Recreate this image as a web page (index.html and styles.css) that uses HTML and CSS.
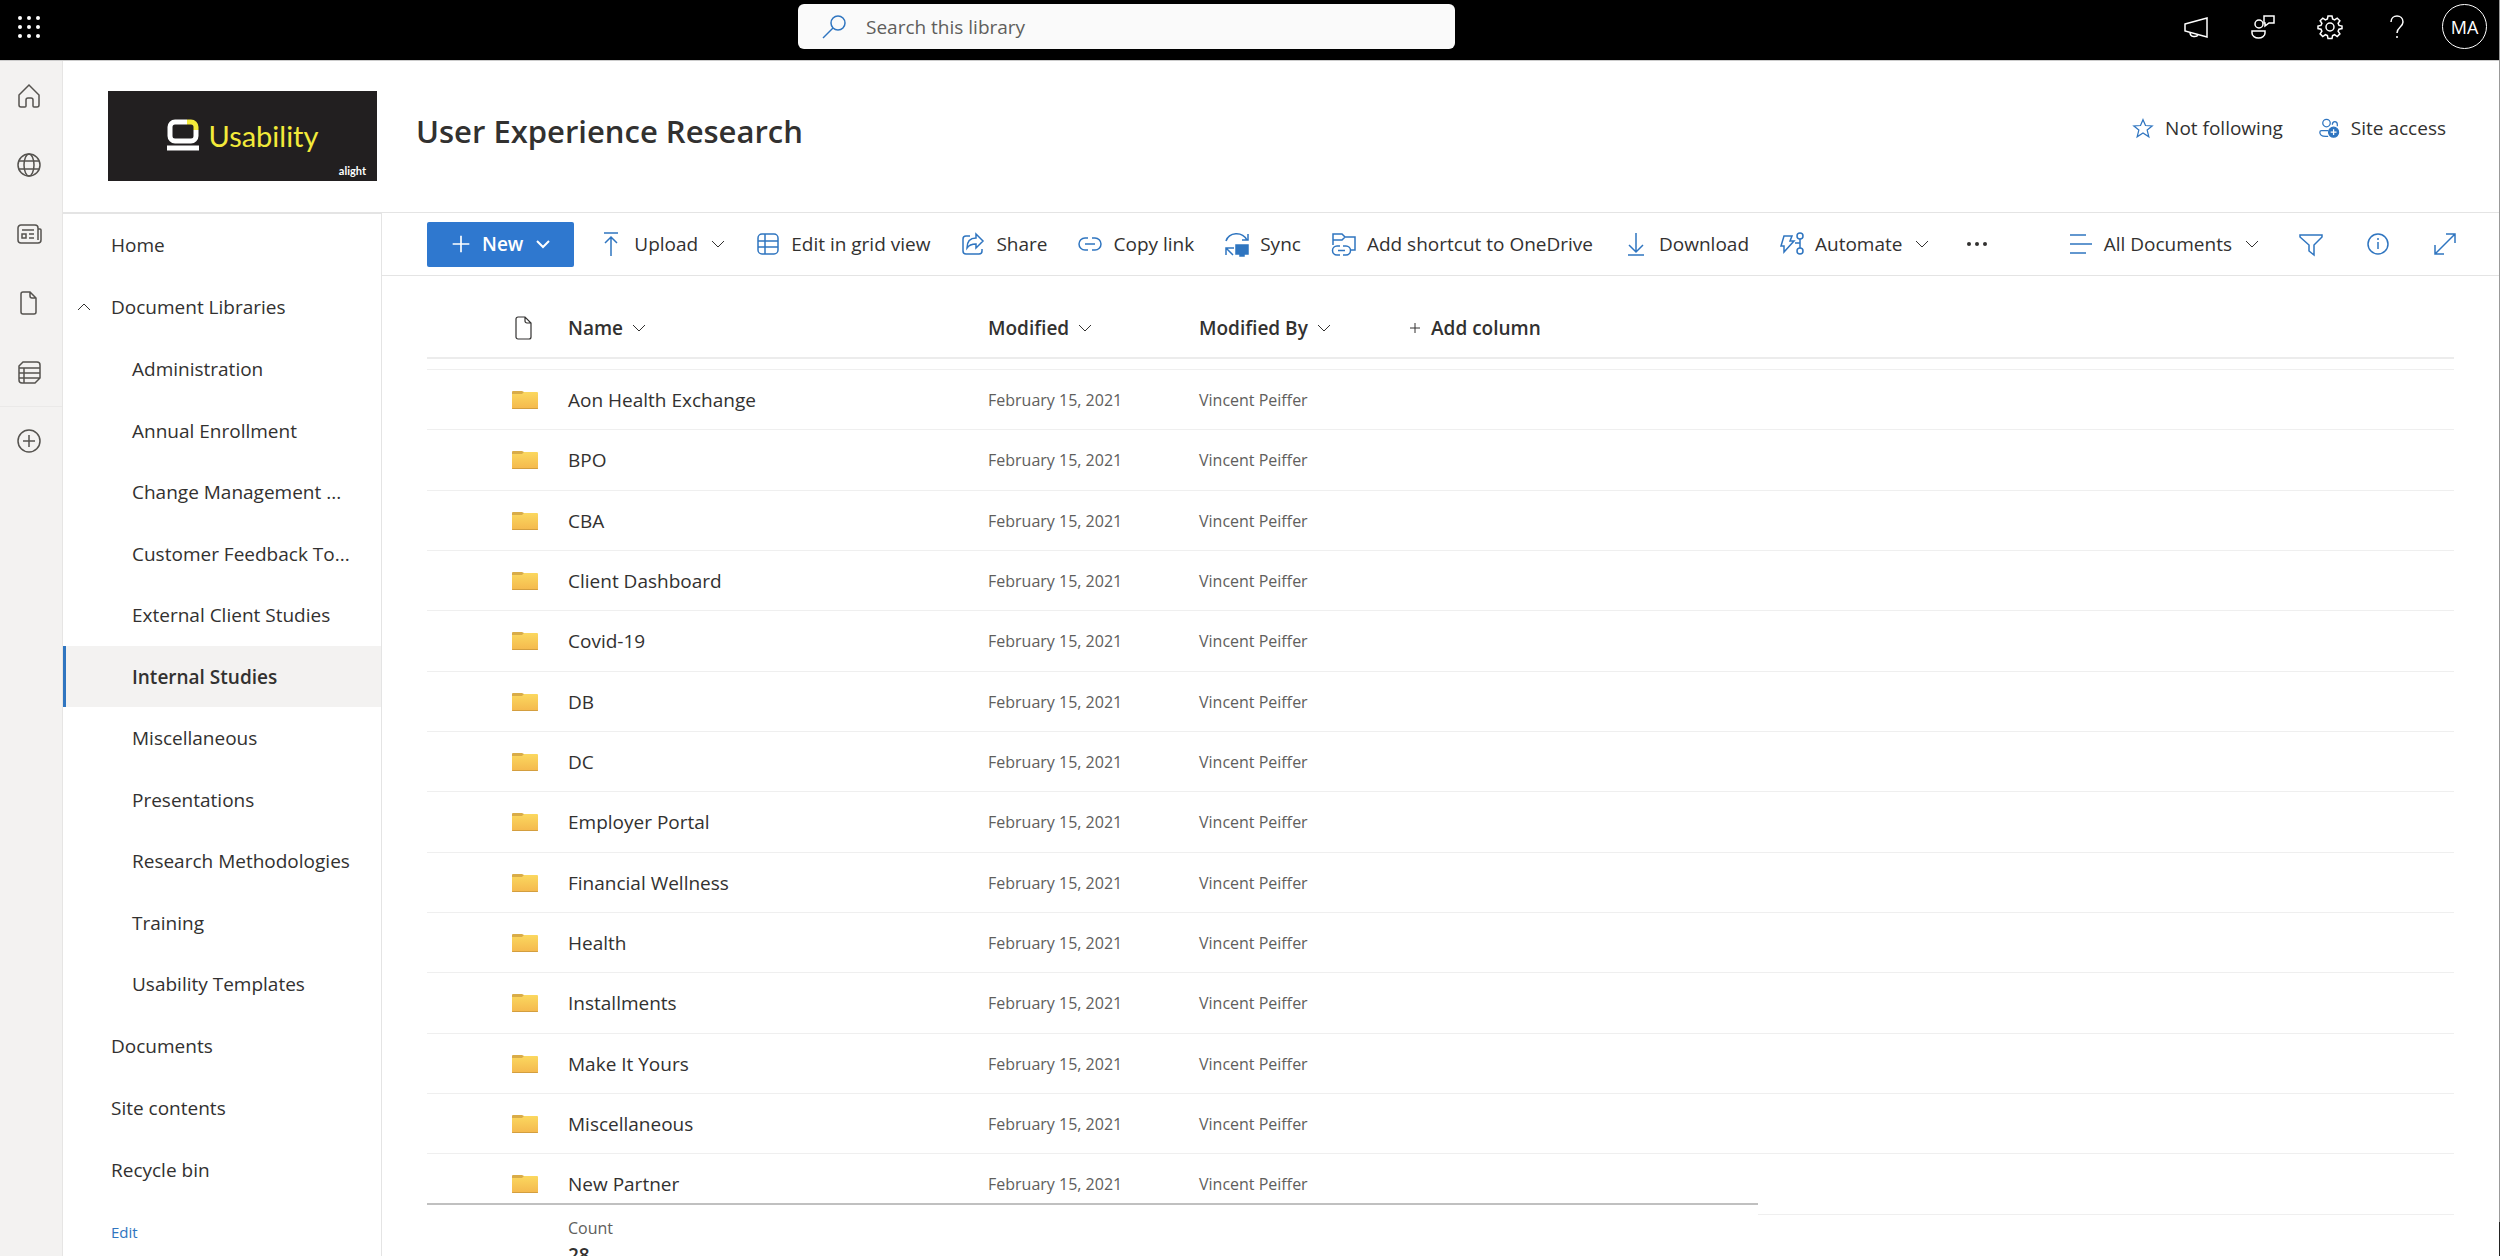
FILE: index.html
```html
<!DOCTYPE html>
<html lang="en">
<head>
    <meta charset="UTF-8">
    <meta name="viewport" content="width=device-width, initial-scale=1.0">
    <title>User Experience Research - Internal Studies</title>
    <link rel="stylesheet" href="styles.css">
</head>
<body>

    <!-- shared icons -->
    <svg class="sprite" aria-hidden="true">
        <defs>
            <linearGradient id="folderFill" x1="0" y1="0" x2="0" y2="1">
                <stop offset="0" stop-color="#fbd85f"/>
                <stop offset="1" stop-color="#f4b84d"/>
            </linearGradient>
        </defs>
        <symbol id="folder" viewBox="0 0 26 20">
            <path d="M0 2a1 1 0 0 1 1-1h9l2 1v3H0z" fill="#d9ac48"/>
            <path d="M0 4h10l2-2h13a1 1 0 0 1 1 1v16H0z" fill="url(#folderFill)"/>
            <path d="M0 18h26a1 1 0 0 1-1 1H1a1 1 0 0 1-1-1z" fill="#d39e3f"/>
        </symbol>
        <symbol id="chevron" viewBox="0 0 14 14">
            <path d="M1 4l6 6 6-6"/>
        </symbol>
        <symbol id="file" viewBox="0 0 24 24">
            <path d="M6 1h7l6 6v14a2 2 0 0 1-2 2H6a2 2 0 0 1-2-2V3a2 2 0 0 1 2-2zM13 1v4a2 2 0 0 0 2 2h4"/>
        </symbol>
    </svg>

    <div class="page">

    <header class="topbar">
        <button class="waffle" aria-label="App launcher">
            <svg class="icon solid" viewBox="0 0 24 24">
                <circle cx="3" cy="3" r="2"/><circle cx="12" cy="3" r="2"/><circle cx="21" cy="3" r="2"/>
                <circle cx="3" cy="12" r="2"/><circle cx="12" cy="12" r="2"/><circle cx="21" cy="12" r="2"/>
                <circle cx="3" cy="21" r="2"/><circle cx="12" cy="21" r="2"/><circle cx="21" cy="21" r="2"/>
            </svg>
        </button>

        <label class="search">
            <svg class="icon blue" viewBox="0 0 24 24"><circle cx="16" cy="8" r="7"/><path d="M11 13L1 23"/></svg>
            <input type="search" placeholder="Search this library" aria-label="Search this library">
        </label>

        <div class="topActions">
            <button aria-label="Announcements">
                <svg class="icon" viewBox="0 0 24 24"><path d="M1 9l22-6v19L1 16zM6 17.5c0 5 7 5 8 2"/></svg>
            </button>
            <button aria-label="Feedback">
                <svg class="icon" viewBox="0 0 24 24"><circle cx="8" cy="9" r="4"/><path d="M1 16h13v2c0 3-3 5-6.500 5S1 21 1 18zM13 1h10v7h-5l-4 3V8h-1z"/></svg>
            </button>
            <button aria-label="Settings">
                <svg class="icon" viewBox="0 0 24 24"><circle cx="12" cy="12" r="4"/><path d="M10 1h4l.6 3 2 .9 2.6-1.8 2.700 2.700-1.800 2.600.9 2 3 .6v2.600l-3 .6-.9 2 1.800 2.600-2.700 2.700-2.600-1.800-2 .9-.6 3h-4l-.6-3-2-.9-2.600 1.800-2.700-2.700 1.800-2.600-.9-2-3-.6V11l3-.6.9-2L2.100 5.800l2.700-2.700 2.600 1.800 2-.9z"/></svg>
            </button>
            <button aria-label="Help">
                <svg class="icon" viewBox="0 0 24 24"><path d="M6 7c0-8 12-8 12 0 0 5-6 5-6 11M12 21v2"/></svg>
            </button>
            <button class="avatar">MA</button>
        </div>
    </header>

    <div class="body">

        <nav class="rail" aria-label="SharePoint">
            <a href="#" aria-label="Home">
                <svg class="icon" viewBox="0 0 24 24"><path d="M2 11L12 1l10 10v10a2 2 0 0 1-2 2h-3a1 1 0 0 1-1-1v-6a2 2 0 0 0-2-2h-3a2 2 0 0 0-2 2v6a1 1 0 0 1-1 1H4a2 2 0 0 1-2-2z"/></svg>
            </a>
            <a href="#" aria-label="My sites">
                <svg class="icon" viewBox="0 0 24 24"><circle cx="12" cy="12" r="11"/><ellipse cx="12" cy="12" rx="5" ry="11"/><path d="M2 8h20M2 16h20"/></svg>
            </a>
            <a href="#" aria-label="News">
                <svg class="icon" viewBox="0 0 24 24"><path d="M4 3h14a3 3 0 0 1 3 3v12M4 3a3 3 0 0 0-3 3v12a3 3 0 0 0 3 3h17a3 3 0 0 0 3-3V8a1 1 0 0 0-1-1h-2M5 8h12M12 12h5M12 16h5M5 12h4v4H5z"/></svg>
            </a>
            <a href="#" aria-label="Files">
                <svg class="icon"><use href="#file"/></svg>
            </a>
            <a href="#" aria-label="Lists">
                <svg class="icon" viewBox="0 0 24 24"><path d="M2 6l4-4h14a3 3 0 0 1 3 3v13l-5 5H5a3 3 0 0 1-3-3zM2 8h21M2 13h21M2 18h21M7 8v15"/></svg>
            </a>
            <a href="#" class="create" aria-label="Create">
                <svg class="icon" viewBox="0 0 24 24"><circle cx="12" cy="12" r="11"/><path d="M12 6v12M6 12h12"/></svg>
            </a>
        </nav>

        <div class="site">

            <div class="siteHeader">
                <a href="#" class="logo">
                    <svg class="logoMark" viewBox="0 0 32 32">
                        <path d="M20 3H8a5 5 0 0 0-5 5v9a5 5 0 0 0 5 5h16a5 5 0 0 0 5-5v-6" stroke="#fff"/>
                        <path d="M20 3h4a5 5 0 0 1 5 5v3" stroke="#f3ea3a"/>
                        <path d="M0 29h32" stroke="#fff"/>
                    </svg>
                    <span class="logoText">Usability</span>
                    <span class="logoBrand">alight</span>
                </a>
                <h1>User Experience Research</h1>
                <div class="siteActions">
                    <button>
                        <svg class="icon small blue" viewBox="0 0 24 24"><path d="M12 2l3 7 8 .5-6 5 2 8-7-4.500-7 4.500 2-8-6-5L9 9z"/></svg>
                        Not following
                    </button>
                    <button>
                        <svg class="icon small blue" viewBox="0 0 24 24"><circle cx="9" cy="6" r="4.500"/><path d="M11 22H8c-4 0-7-2-7-5 0-1 1-2 2-2h8M16 8c0-5 6-5 6 0v2"/><circle class="fill" cx="17.500" cy="17" r="6"/><path class="white" d="M17.500 13.500v7M14 17h7"/></svg>
                        Site access
                    </button>
                </div>
            </div>

            <div class="columns">

                <nav class="sideNav" aria-label="Site">
                    <ul>
                        <li><a href="#">Home</a></li>
                        <li>
                            <a href="#" class="group"><svg class="chevron up"><use href="#chevron"/></svg>Document Libraries</a>
                            <ul class="subNav">
                                <li><a href="#">Administration</a></li>
                                <li><a href="#">Annual Enrollment</a></li>
                                <li><a href="#">Change Management ...</a></li>
                                <li><a href="#">Customer Feedback To...</a></li>
                                <li><a href="#">External Client Studies</a></li>
                                <li><a href="#" class="selected">Internal Studies</a></li>
                                <li><a href="#">Miscellaneous</a></li>
                                <li><a href="#">Presentations</a></li>
                                <li><a href="#">Research Methodologies</a></li>
                                <li><a href="#">Training</a></li>
                                <li><a href="#">Usability Templates</a></li>
                            </ul>
                        </li>
                        <li><a href="#">Documents</a></li>
                        <li><a href="#">Site contents</a></li>
                        <li><a href="#">Recycle bin</a></li>
                        <li><a href="#" class="edit">Edit</a></li>
                    </ul>
                </nav>

                <main>
                    <div class="commandBar">
                        <button class="newButton">
                            <svg class="icon small" viewBox="0 0 24 24"><path d="M12 2v20M2 12h20"/></svg>
                            New
                            <svg class="chevron"><use href="#chevron"/></svg>
                        </button>
                        <button>
                            <svg class="icon blue" viewBox="0 0 24 24"><path d="M5 1h14M12 5v19M6 11l6-6 6 6"/></svg>
                            Upload
                            <svg class="chevron"><use href="#chevron"/></svg>
                        </button>
                        <button>
                            <svg class="icon blue" viewBox="0 0 24 24"><rect x="2" y="2" width="20" height="20" rx="4"/><path d="M2 9h20M2 15h20M9 2v20"/></svg>
                            Edit in grid view
                        </button>
                        <button>
                            <svg class="icon blue" viewBox="0 0 24 24"><path d="M9 4H5a3 3 0 0 0-3 3v12a3 3 0 0 0 3 3h13a3 3 0 0 0 3-3v-2M15 2l7 7-7 7v-4c-4 0-7 1-9 4 0-6 3-10 9-10z"/></svg>
                            Share
                        </button>
                        <button>
                            <svg class="icon blue" viewBox="0 0 24 24"><path d="M10 6H7a6 6 0 0 0 0 12h3M14 6h3a6 6 0 0 1 0 12h-3M7 12h10"/></svg>
                            Copy link
                        </button>
                        <button>
                            <svg class="icon blue" viewBox="0 0 24 24"><path d="M1 9C4 0 17-1 22 8M23 2v6h-6M9 16H1v7M1 16l7 7"/><path class="fill" d="M11 13h12v9h-4v2h-4v-2h-4z"/></svg>
                            Sync
                        </button>
                        <button>
                            <svg class="icon blue" viewBox="0 0 24 24"><path d="M1 13V2h9l3 3h10v13h-4M1 8h9l3-3M8 14H5a4 4 0 0 0 0 9h3M11 14h3a4 4 0 0 1 0 9h-3M6 18.500h7"/></svg>
                            Add shortcut to OneDrive
                        </button>
                        <button>
                            <svg class="icon blue" viewBox="0 0 24 24"><path d="M12 1v18M5 13l7 7 7-7M4 23h16"/></svg>
                            Download
                        </button>
                        <button>
                            <svg class="icon blue" viewBox="0 0 24 24"><path d="M4 4h8l-2 5h4L4 20v-6H1z"/><circle cx="20" cy="4" r="3"/><circle cx="20" cy="19" r="3"/><path d="M20 7v9M15 11h5"/></svg>
                            Automate
                            <svg class="chevron"><use href="#chevron"/></svg>
                        </button>
                        <button class="more" aria-label="More">
                            <svg class="icon solid" viewBox="0 0 24 24"><circle cx="4" cy="12" r="2"/><circle cx="12" cy="12" r="2"/><circle cx="20" cy="12" r="2"/></svg>
                        </button>

                        <button class="viewMenu">
                            <svg class="icon blue" viewBox="0 0 24 24"><path d="M1 3h16M1 12h22M1 21h16"/></svg>
                            All Documents
                            <svg class="chevron"><use href="#chevron"/></svg>
                        </button>
                        <div class="viewTools">
                            <button aria-label="Filters">
                                <svg class="icon blue" viewBox="0 0 24 24"><path d="M1 3h22v2l-8 8v10l-5-4v-6L1 5z"/></svg>
                            </button>
                            <button aria-label="Details">
                                <svg class="icon blue" viewBox="0 0 24 24"><circle cx="12" cy="12" r="10"/><path d="M12 10v7M12 6v2"/></svg>
                            </button>
                            <button aria-label="Expand">
                                <svg class="icon blue" viewBox="0 0 24 24"><path d="M2 22L22 2M13 2h9v9M2 13v9h9"/></svg>
                            </button>
                        </div>
                    </div>

                    <div class="list">
                        <table>
                            <thead>
                                <tr>
                                    <th class="colType"><svg class="icon thin" aria-label="File type"><use href="#file"/></svg></th>
                                    <th class="colName"><button>Name <svg class="chevron"><use href="#chevron"/></svg></button></th>
                                    <th class="colDate"><button>Modified <svg class="chevron"><use href="#chevron"/></svg></button></th>
                                    <th class="colBy"><button>Modified By <svg class="chevron"><use href="#chevron"/></svg></button></th>
                                    <th><button><svg class="chevron" viewBox="0 0 14 14"><path d="M7 2v10M2 7h10"/></svg> Add column</button></th>
                                </tr>
                            </thead>
                            <tbody>
                                <tr class="clipped"><td colspan="5"></td></tr>
                                <tr><td><svg class="folder"><use href="#folder"/></svg></td><td><a href="#">Aon Health Exchange</a></td><td>February 15, 2021</td><td>Vincent Peiffer</td><td></td></tr>
                                <tr><td><svg class="folder"><use href="#folder"/></svg></td><td><a href="#">BPO</a></td><td>February 15, 2021</td><td>Vincent Peiffer</td><td></td></tr>
                                <tr><td><svg class="folder"><use href="#folder"/></svg></td><td><a href="#">CBA</a></td><td>February 15, 2021</td><td>Vincent Peiffer</td><td></td></tr>
                                <tr><td><svg class="folder"><use href="#folder"/></svg></td><td><a href="#">Client Dashboard</a></td><td>February 15, 2021</td><td>Vincent Peiffer</td><td></td></tr>
                                <tr><td><svg class="folder"><use href="#folder"/></svg></td><td><a href="#">Covid-19</a></td><td>February 15, 2021</td><td>Vincent Peiffer</td><td></td></tr>
                                <tr><td><svg class="folder"><use href="#folder"/></svg></td><td><a href="#">DB</a></td><td>February 15, 2021</td><td>Vincent Peiffer</td><td></td></tr>
                                <tr><td><svg class="folder"><use href="#folder"/></svg></td><td><a href="#">DC</a></td><td>February 15, 2021</td><td>Vincent Peiffer</td><td></td></tr>
                                <tr><td><svg class="folder"><use href="#folder"/></svg></td><td><a href="#">Employer Portal</a></td><td>February 15, 2021</td><td>Vincent Peiffer</td><td></td></tr>
                                <tr><td><svg class="folder"><use href="#folder"/></svg></td><td><a href="#">Financial Wellness</a></td><td>February 15, 2021</td><td>Vincent Peiffer</td><td></td></tr>
                                <tr><td><svg class="folder"><use href="#folder"/></svg></td><td><a href="#">Health</a></td><td>February 15, 2021</td><td>Vincent Peiffer</td><td></td></tr>
                                <tr><td><svg class="folder"><use href="#folder"/></svg></td><td><a href="#">Installments</a></td><td>February 15, 2021</td><td>Vincent Peiffer</td><td></td></tr>
                                <tr><td><svg class="folder"><use href="#folder"/></svg></td><td><a href="#">Make It Yours</a></td><td>February 15, 2021</td><td>Vincent Peiffer</td><td></td></tr>
                                <tr><td><svg class="folder"><use href="#folder"/></svg></td><td><a href="#">Miscellaneous</a></td><td>February 15, 2021</td><td>Vincent Peiffer</td><td></td></tr>
                                <tr><td><svg class="folder"><use href="#folder"/></svg></td><td><a href="#">New Partner</a></td><td>February 15, 2021</td><td>Vincent Peiffer</td><td></td></tr>
                            </tbody>
                        </table>
                        <!-- totals stay over the bottom of the list -->
                        <div class="totals">
                            <span>Count</span>
                            <strong>28</strong>
                        </div>
                    </div>
                </main>

            </div>
        </div>
    </div>
    </div>

</body>
</html>
```
FILE: styles.css
```css
*{
    box-sizing: border-box;
}

body{
    margin: 0;
    font-family: "Open Sans", "Noto Sans", sans-serif;
    font-size: 19px;
    color: #323130;
    background-color: #fff;
}

a{
    color: inherit;
    text-decoration: none;
}

ul{
    margin: 0;
    padding: 0;
    list-style: none;
}

button{
    display: flex;
    align-items: center;
    padding: 0;
    border: 0;
    background: none;
    font: inherit;
    color: inherit;
    white-space: nowrap;
    cursor: pointer;
}

.sprite{
    position: absolute;
    width: 0;
    height: 0;
}

/* thin window edge on the right */
.page{
    display: flex;
    flex-direction: column;
    height: 100vh;
    overflow: hidden;
    padding-right: 1px;
    background: linear-gradient(#999 calc(100% - 34px), #222 0);
}

/* icons */
.icon{
    flex: none;
    display: block;
    width: 24px;
    height: 24px;
    overflow: visible;
    fill: none;
    stroke: currentColor;
    stroke-width: 1.5;
}

.icon.small{
    width: 20px;
    height: 20px;
}

.icon.thin{
    stroke-width: 1.2;
}

.icon.solid{
    fill: currentColor;
    stroke: none;
}

.blue{
    color: #2f75c0;
}

.icon .fill{
    fill: currentColor;
}

.icon .white{
    stroke: #fff;
}

.chevron{
    flex: none;
    width: 14px;
    height: 14px;
    fill: none;
    stroke: currentColor;
    stroke-width: 1;
}

.chevron.up{
    transform: rotate(180deg);
}

.folder{
    display: block;
    width: 26px;
    height: 20px;
}

/* top bar */
.topbar{
    flex: none;
    display: grid;
    grid-template-columns: 798fr 657fr 1044fr;
    height: 61px;
    padding-bottom: 7px;
    align-items: center;
    background-color: #000;
    border-bottom: 1px solid #ccc;
    color: #fff;
}

.waffle{
    width: 58px;
    height: 52px;
    justify-content: center;
}

.search{
    display: flex;
    align-items: center;
    gap: 20px;
    height: 45px;
    padding: 0 24px;
    border-radius: 6px;
    background-color: #fafafa;
}

.search input{
    flex: 1;
    padding: 0;
    border: 0;
    outline: 0;
    background: none;
    font: inherit;
    color: #605e5c;
}

.search input::placeholder{
    color: #605e5c;
    opacity: 1;
}

.topActions{
    display: flex;
    justify-content: flex-end;
    align-items: center;
    padding-right: 12px;
}

.topActions button{
    width: 67px;
    justify-content: center;
}

.topActions .avatar{
    width: 45px;
    height: 45px;
    margin-left: 12px;
    border: 1px solid #fff;
    border-radius: 50%;
    font-size: 18px;
}

/* left rail */
.body{
    flex: 1;
    min-height: 0;
    display: flex;
}

.rail{
    flex: none;
    width: 63px;
    background-color: #f3f2f1;
    border-right: 1px solid #e6e5e4;
    color: #55534f;
}

.rail a{
    display: flex;
    align-items: center;
    height: 69px;
    padding-left: 17px;
}

.rail .create{
    border-top: 1px solid #eae9e8;
}

.site{
    flex: 1;
    min-width: 0;
    display: flex;
    flex-direction: column;
    background-color: #fff;
}

/* site header */
.siteHeader{
    flex: none;
    display: flex;
    align-items: flex-start;
    height: 152px;
    padding: 30px 53px 0 45px;
    border-bottom: 1px solid #e4e4e4;
}

.logo{
    position: relative;
    display: flex;
    align-items: center;
    justify-content: center;
    gap: 10px;
    width: 269px;
    height: 90px;
    padding-bottom: 2px;
    background-color: #221f20;
}

.logoMark{
    width: 32px;
    height: 32px;
    fill: none;
    stroke-width: 5;
}

.logoText{
    font-family: Lato, sans-serif;
    font-size: 29px;
    color: #f3ea3a;
}

.logoBrand{
    position: absolute;
    right: 11px;
    bottom: 4px;
    font-family: Lato, sans-serif;
    font-size: 11px;
    font-weight: bold;
    color: #fff;
}

h1{
    margin: 0 0 0 39px;
    font-size: 31px;
    font-weight: 600;
    line-height: 80px;
}

.siteActions{
    display: flex;
    gap: 36px;
    margin-left: auto;
}

.siteActions button{
    gap: 12px;
    line-height: 74px;
}

/* site navigation */
.columns{
    flex: 1;
    min-height: 0;
    display: flex;
}

.sideNav{
    flex: none;
    width: 319px;
    overflow: hidden;
    border-top: 1px solid #e4e4e4;
    border-right: 1px solid #e4e4e4;
}

.sideNav a{
    display: flex;
    align-items: center;
    height: 62px;
    padding-left: 48px;
    white-space: nowrap;
}

.sideNav .group{
    padding-left: 14px;
    gap: 20px;
}

.subNav a{
    padding-left: 69px;
}

.subNav li:nth-child(2n) a{
    height: 61px;
}

.subNav .selected{
    padding-left: 66px;
    border-left: 3px solid #2f75c0;
    background-color: #f3f2f1;
    font-weight: 600;
}

.sideNav .edit{
    font-size: 15px;
    color: #2f75c0;
}

/* command bar */
main{
    flex: 1;
    min-width: 0;
    display: flex;
    flex-direction: column;
}

.commandBar{
    flex: none;
    display: flex;
    align-items: center;
    gap: 31px;
    height: 63px;
    padding: 0 21px 0 45px;
    border-bottom: 1px solid #e4e4e4;
}

.commandBar button{
    gap: 11px;
}

.commandBar .chevron{
    margin-left: 2px;
}

.commandBar .newButton{
    height: 45px;
    padding: 0 24px;
    margin-right: -6px;
    border-radius: 2px;
    background-color: #2f78cf;
    color: #fff;
    font-weight: 600;
}

.commandBar .more{
    margin-left: 5px;
}

.commandBar .viewMenu{
    margin-left: auto;
    margin-right: -13px;
}

.newButton .icon,
.newButton .chevron{
    stroke-width: 2;
}

.viewTools{
    display: flex;
}

.viewTools button{
    width: 67px;
    justify-content: center;
}

/* document list */
.list{
    position: relative;
    flex: 1;
    min-height: 0;
    overflow: hidden;
    padding: 0 45px;
}

table{
    width: 100%;
    table-layout: fixed;
    border-collapse: separate;
    border-spacing: 0;
}

th{
    height: 83px;
    padding: 22px 0 0;
    border-bottom: 2px solid #ececec;
    text-align: left;
    font-weight: 600;
}

th button{
    gap: 9px;
}

.colType{
    width: 141px;
}

.colName{
    width: 420px;
}

.colDate{
    width: 211px;
}

.colBy{
    width: 209px;
}

td{
    height: 60px;
    padding: 0;
    border-bottom: 1px solid #efefef;
    font-size: 16px;
    color: #605e5c;
}

td:first-child,
.colType{
    padding-left: 85px;
}

td a{
    font-size: 19px;
    color: #323130;
}

tr:nth-child(3n) td{
    height: 61px;
}

.clipped td{
    height: 11px;
}

.totals{
    position: absolute;
    left: 45px;
    bottom: 0;
    display: flex;
    flex-direction: column;
    width: 1331px;
    height: 53px;
    padding: 10px 0 0 141px;
    overflow: hidden;
    border-top: 2px solid #c0c0c0;
    background-color: #fff;
    font-size: 16px;
    line-height: 26px;
    color: #605e5c;
}

.totals strong{
    font-size: 19px;
    font-weight: 600;
    line-height: 28px;
    color: #323130;
}
```
